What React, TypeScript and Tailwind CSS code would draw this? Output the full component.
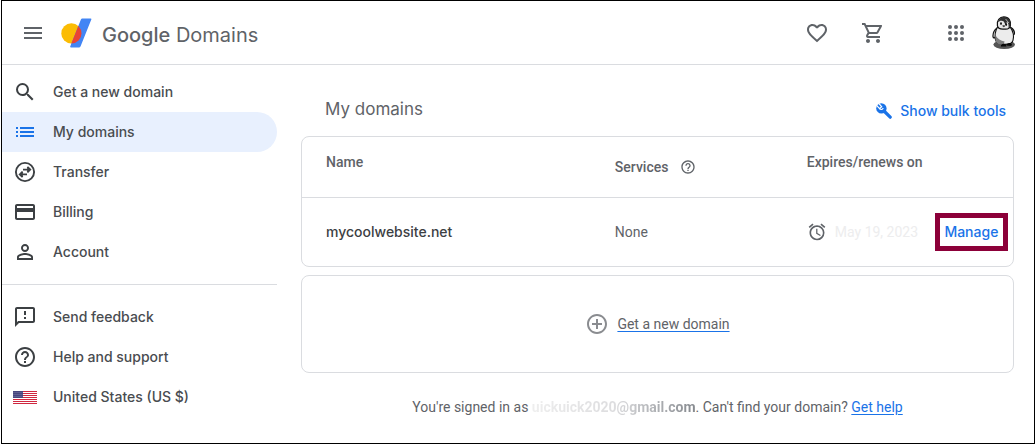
import React from 'react';
import {
  MdAddCircleOutline,
  MdAlarm,
  MdFavoriteBorder,
  MdHelpOutline,
  MdList,
  MdMenu,
  MdOutlineCreditCard,
  MdOutlineFeedback,
  MdOutlineShoppingCart,
  MdPersonOutline,
  MdSearch,
} from 'react-icons/md';

const LogoMark: React.FC = () => (
  <svg width="31" height="30" viewBox="0 0 31 30" aria-hidden="true">
    <defs>
      <clipPath id="logo-stem">
        <path d="M21.3 0.4H29.6Q30.8 0.4 30.3 1.6L19.6 28.2Q19.1 29.4 17.9 29.4H10Q8.8 29.4 9.3 28.2L19.9 1.4Q20.3 0.4 21.3 0.4Z" />
      </clipPath>
    </defs>
    <circle cx="10.4" cy="15.4" r="10.1" fill="#fbbc04" />
    <g clipPath="url(#logo-stem)">
      <rect width="31" height="30" fill="#4285f4" />
      <circle cx="10.4" cy="15.4" r="10.1" fill="#ea4335" />
    </g>
  </svg>
);

const TransferIcon: React.FC = () => (
  <svg width="24" height="24" viewBox="0 0 24 24" fill="none" stroke="currentColor" strokeWidth="1.9" aria-hidden="true">
    <circle cx="12" cy="12" r="9.1" />
    <path d="M10 9.6H17M14.4 6.8L17.2 9.6L14.4 12.4M14 14.4H7M9.6 11.6L6.8 14.4L9.6 17.2" />
    <path d="M14.2 6.8V12.4L17.6 9.6ZM9.8 11.6V17.2L6.4 14.4Z" fill="currentColor" stroke="none" />
  </svg>
);

const WrenchIcon: React.FC = () => (
  <svg width="16" height="16" viewBox="0 0 16 16" fill="none" aria-hidden="true">
    <circle cx="5.4" cy="5.4" r="5.2" fill="currentColor" />
    <path d="M8 8L14.2 14.2" stroke="currentColor" strokeWidth="3.2" strokeLinecap="round" />
    <path d="M0.6 2.4L3.6 5.6L5.6 3.6L3 0.6" stroke="#fff" strokeWidth="1.3" />
    <path d="M3.6 5.6C4.8 7 6.6 6.8 7.2 5" stroke="#fff" strokeWidth="1.1" />
  </svg>
);

const AppsIcon: React.FC = () => (
  <svg width="24" height="24" viewBox="0 0 24 24" fill="currentColor" aria-hidden="true">
    {[6, 12, 18].map((y) => [6, 12, 18].map((x) => <circle key={`${x}-${y}`} cx={x} cy={y} r="2" />))}
  </svg>
);

const FlagIcon: React.FC = () => (
  <svg width="24" height="13" viewBox="0 0 24 13" aria-hidden="true">
    <rect width="24" height="13" fill="#fff" />
    {[0, 2, 4, 6, 8, 10, 12].map((y) => (
      <rect key={y} y={y} width="24" height="1" fill="#d02840" />
    ))}
    <rect width="10" height="7" fill="#46467f" />
    {[1, 3, 5].map((y) => [1, 3, 5, 7, 9].map((x) => (
      <circle key={`${x}-${y}`} cx={x} cy={y + 0.5} r="0.4" fill="#b9b9d2" />
    )))}
  </svg>
);

const PenguinAvatar: React.FC = () => (
  <svg width="24" height="34" viewBox="0 0 24 34" aria-hidden="true">
    <ellipse cx="12.2" cy="28.6" rx="10.8" ry="4.4" fill="#555" />
    <path d="M5 12C2.5 14 .8 18 1 20.6C1.2 22.4 2.8 22.3 4 20.6M19 11.5C21.2 13 22.8 15 22.4 17.6C22.1 19.4 21 19 20 18" fill="#e4e4e4" stroke="#111" strokeWidth="1.2" />
    <path d="M5.4 11.2C3.2 15 2.6 20 3.6 24.4C5 29.4 19.8 30 21 24.4C22.2 19.4 20.8 14.6 18.2 11.2Z" fill="#ececec" stroke="#111" strokeWidth="1.1" />
    <path d="M3.6 19.6C5.6 23 8.6 25 12.6 25.6L11.4 29C7 28.8 4 27.4 3.4 24Z" fill="#7d7d7d" />
    <path d="M5.4 9.6C4.4 4.4 7.8.8 11.8.8C16.6.8 19.2 4.8 18.4 9.8C17.6 13.2 14.4 13.4 11.8 13C8.6 13.2 5.8 12.4 5.4 9.6Z" fill="#e6e6e6" stroke="#111" strokeWidth="1.2" />
    <path d="M5.8 6.6C6.8 2.4 9.8.8 12.4.9C16.6 1.1 19.2 4.8 18.4 9.8L16.4 12.6C17 9.8 16.6 7 15 5.4L13.8 9.4L11.8 5.4C9.8 4.2 7.4 4.6 5.8 6.6Z" fill="#303030" />
    <path d="M13.6 3L16.8 7" stroke="#aaa" strokeWidth="1" />
    <ellipse cx="9" cy="7.6" rx=".9" ry="1.3" fill="#111" />
    <ellipse cx="14.2" cy="8.6" rx=".9" ry="1.3" fill="#111" />
    <path d="M10.2 9.4L12.4 9L13.2 10.4L11.2 11.2Z" fill="#444" />
    <path d="M9 30.4C8.4 27.8 12.2 26.6 14 28.8L14.4 30.6ZM14.6 29.4C15 26.4 19.2 26.2 20 28.6L19.2 30Z" fill="#090909" />
  </svg>
);

interface NavItemProps {
  icon: React.ReactNode;
  label: string;
  active?: boolean;
}

const NavItem: React.FC<NavItemProps> = ({ icon, label, active }) => (
  <a
    href="#"
    className={`flex h-10 items-center gap-4 rounded-r-full pl-[11px] font-['Inter',sans-serif] text-sm font-medium text-[#494c50] ${active ? 'bg-[#e8f0fe]' : ''}`}
  >
    <span className={`flex w-6 justify-center ${active ? 'text-[#1a73e8]' : 'text-[#3c4043]'}`}>{icon}</span>
    {label}
  </a>
);

const Header: React.FC = () => (
  <header className="flex h-16 items-center border-b border-[#dadce0] pr-[18px] pl-[19px] text-[#5f6368]">
    <button type="button" aria-label="Main menu">
      <MdMenu size={24} />
    </button>
    <a href="#" className="ml-4 flex items-center gap-2.5 font-['Inter',sans-serif] text-xl">
      <LogoMark />
      <span className="pt-1">
        <span className="font-medium">Google</span> Domains
      </span>
    </a>
    <div className="ml-auto flex items-center">
      <button type="button" aria-label="Favorites" className="mr-8">
        <MdFavoriteBorder size={24} />
      </button>
      <button type="button" aria-label="Cart" className="mr-[59px]">
        <MdOutlineShoppingCart size={24} />
      </button>
      <button type="button" aria-label="Google apps" className="mr-6">
        <AppsIcon />
      </button>
      <button type="button" aria-label="Account menu">
        <PenguinAvatar />
      </button>
    </div>
  </header>
);

const Sidebar: React.FC = () => (
  <nav className="w-[275px] shrink-0 pt-[7px]">
    <NavItem icon={<MdSearch size={24} />} label="Get a new domain" />
    <NavItem icon={<MdList size={24} />} label="My domains" active />
    <NavItem icon={<TransferIcon />} label="Transfer" />
    <NavItem icon={<MdOutlineCreditCard size={24} />} label="Billing" />
    <NavItem icon={<MdPersonOutline size={24} />} label="Account" />
    <hr className="my-3 border-[#dadce0]" />
    <NavItem icon={<MdOutlineFeedback size={24} />} label="Send feedback" />
    <NavItem icon={<MdHelpOutline size={24} />} label="Help and support" />
    <NavItem icon={<FlagIcon />} label="United States (US $)" />
  </nav>
);

const DomainTable: React.FC = () => (
  <div className="rounded-lg border border-[#dadce0]">
    <table className="w-full table-fixed text-left">
      <thead>
        <tr className="h-[60px] border-b border-[#dadce0]">
          <th className="w-[44%] pt-[15px] pl-6 align-top font-medium">Name</th>
          <th className="w-[27%] font-medium">
            <span className="flex items-center gap-3">
              Services
              <button type="button" aria-label="About services">
                <MdHelpOutline size={16} />
              </button>
            </span>
          </th>
          <th className="w-[18%] pt-[15px] align-top font-medium whitespace-nowrap">Expires/renews on</th>
          <th className="w-[11%]" aria-label="Actions" />
        </tr>
      </thead>
      <tbody>
        <tr className="h-[69px]">
          <td className="pl-6 font-['Inter',sans-serif] font-medium text-[#3c4043]">mycoolwebsite.net</td>
          <td>None</td>
          <td>
            <span className="flex items-center gap-2 whitespace-nowrap">
              <MdAlarm size={20} />
              <span className="text-[#ededee]">May 19, 2023</span>
            </span>
          </td>
          <td>
            <a
              href="#"
              className="mr-[5px] flex h-[38px] items-center justify-center border-5 border-[#8c0039] font-['Inter',sans-serif] font-medium text-[#1a73e8]"
            >
              Manage
            </a>
          </td>
        </tr>
      </tbody>
    </table>
  </div>
);

const App: React.FC = () => {
  return (
    <div className="mx-px border border-black bg-white font-['Roboto',sans-serif] text-sm text-[#5f6368]">
      <Header />
      <div className="flex pb-[26px]">
        <Sidebar />
        <main className="min-w-0 flex-1 pt-8 pr-5 pl-6">
          <div className="flex h-6 items-center justify-between pr-2 pl-6 font-['Inter',sans-serif]">
            <h1 className="text-[17px]">My domains</h1>
            <button type="button" className="flex items-center gap-2 pt-1 font-medium text-[#1a73e8]">
              <WrenchIcon />
              Show bulk tools
            </button>
          </div>
          <div className="mt-[15px] flex flex-col gap-2">
            <DomainTable />
            <div className="flex items-center justify-center gap-2 rounded-lg border border-[#dadce0] py-9">
              <MdAddCircleOutline size={24} className="text-[#8a8c90]" />
              <a href="#" className="underline decoration-[#1a73e8] underline-offset-2">Get a new domain</a>
            </div>
          </div>
          <p className="mt-6 text-center">
            You're signed in as{' '}
            <b className="bg-linear-to-r from-[#eeeeee] via-[#dddddf] to-[#85898e] bg-clip-text font-bold text-transparent">
              uickuick2020@gmail.com
            </b>
            . Can't find your domain?{' '}
            <a href="#" className="text-[#1a73e8] underline underline-offset-2">Get help</a>
          </p>
        </main>
      </div>
    </div>
  );
};

export default App;
